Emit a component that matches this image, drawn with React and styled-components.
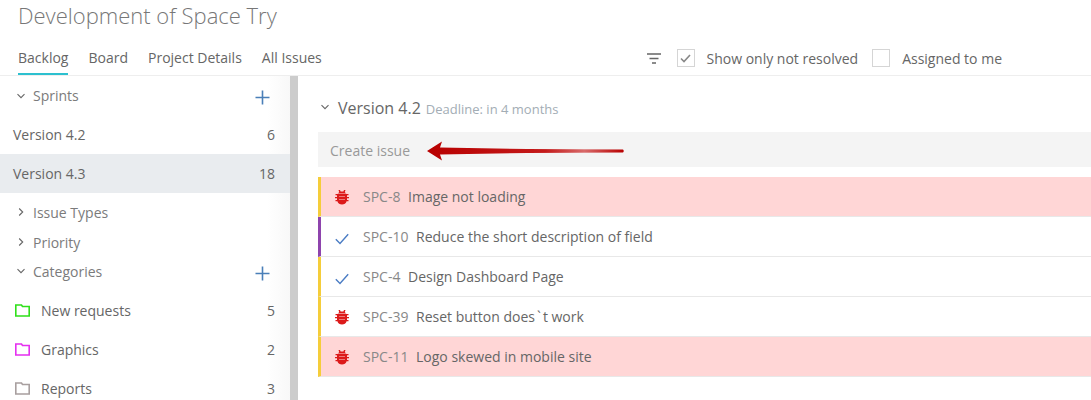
import React from 'react'
import styled, { createGlobalStyle } from 'styled-components'

const sprints = [
  { name: 'Version 4.2', count: 6 },
  { name: 'Version 4.3', count: 18, active: true },
]

const categories = [
  { name: 'New requests', count: 5, color: '#2fe01a' },
  { name: 'Graphics', count: 2, color: '#e52ff0' },
  { name: 'Reports', count: 3, color: '#a89f9f' },
]

const GlobalStyle = createGlobalStyle`
  html, body {
    margin: 0;
    padding: 0;
    background: #fff;
  }
  body {
    font-family: 'Open Sans', 'Liberation Sans', sans-serif;
    font-size: 14px;
    color: #666;
  }
`

const Page = styled.div`
  width: 1091px;
  height: 400px;
  overflow: hidden;
  display: flex;
  flex-direction: column;
`

const Header = styled.header`
  height: 76px;
  flex: none;
  box-sizing: border-box;
  border-bottom: 1px solid #eeeeee;
  padding-left: 18px;
`

const Title = styled.h1`
  margin: 0;
  height: 41px;
  font-size: 22px;
  line-height: 31px;
  font-weight: 300;
  color: #777;
`

const NavBar = styled.div`
  display: flex;
  justify-content: space-between;
  height: 34px;
`

const Tabs = styled.nav`
  display: flex;
  gap: 20px;
`

const Tab = styled.a`
  height: 34px;
  box-sizing: border-box;
  line-height: 33px;
  border-bottom: ${({ active }) => (active ? '2px solid #2cc0cf' : 'none')};
  color: #666;
`

const Filters = styled.div`
  display: flex;
  align-items: center;
  height: 34px;
  padding-right: 89px;
`

const FilterIcon = styled.svg`
  width: 14px;
  height: 11px;
  margin-right: 16px;
`

const CheckBox = styled.span`
  width: 18px;
  height: 18px;
  box-sizing: border-box;
  border: 1px solid #d5d5d5;
  display: flex;
  align-items: center;
  justify-content: center;
  margin-right: 12px;
`

const FilterLabel = styled.span`
  margin-right: 14px;
  line-height: 19px;
  color: #666;
  &:last-child {
    margin-right: 0;
  }
`

const Body = styled.div`
  flex: 1;
  display: flex;
  min-height: 0;
`

const Sidebar = styled.aside`
  width: 290px;
  flex: none;
  background: linear-gradient(90deg, #fff 92%, #f8f8f8 100%);
`

const Scrollbar = styled.div`
  width: 8px;
  flex: none;
  background: #cccccc;
`

const Group = styled.div`
  display: flex;
  align-items: center;
  height: ${({ h }) => h}px;
  padding: 0 20px 0 17px;
  box-sizing: border-box;
  color: #7b7b7b;
`

const GroupName = styled.span`
  flex: 1;
  margin-left: 8px;
  line-height: 19px;
`

const Chevron = styled.svg`
  width: 8px;
  height: 8px;
  flex: none;
`

const PlusIcon = styled.svg`
  width: 15px;
  height: 15px;
  margin-top: 4px;
  flex: none;
`

const SideRow = styled.div`
  display: flex;
  align-items: center;
  height: 39px;
  padding: 0 15px 0 13px;
  background: ${({ active }) => (active ? '#e9ecef' : 'transparent')};
  color: #666;
`

const RowName = styled.span`
  flex: 1;
`

const Spacer = styled.div`
  height: ${({ h }) => h}px;
`

const FolderIcon = styled.svg`
  width: 15px;
  height: 13px;
  margin: 0 11px 0 2px;
  flex: none;
`

const Main = styled.main`
  flex: 1;
  padding: 0 0 0 20px;
  min-width: 0;
`

const VersionHead = styled.div`
  display: flex;
  align-items: baseline;
  height: 56px;
  padding-top: 21px;
  box-sizing: border-box;
`

const VersionChevron = styled(Chevron)`
  margin: 0 9px 0 3px;
  align-self: center;
  position: relative;
  top: -8px;
`

const VersionName = styled.span`
  font-size: 16px;
  color: #666;
  margin-right: 5px;
`

const Deadline = styled.span`
  font-size: 13px;
  color: #a3adb5;
`

const CreateBar = styled.div`
  position: relative;
  height: 35px;
  line-height: 37px;
  padding-left: 12px;
  background: #f4f4f4;
  color: #999;
  margin-bottom: 10px;
`

const Arrow = styled.svg`
  position: absolute;
  left: 109px;
  top: 9px;
  width: 200px;
  height: 20px;
`

const IssueRow = styled.div`
  display: flex;
  align-items: center;
  height: 40px;
  box-sizing: border-box;
  border-left: 3px solid ${({ bar }) => bar};
  border-bottom: 1px solid #e8e8e8;
  background: ${({ hot }) => (hot ? '#ffd6d6' : '#fff')};
`

const IssueIcon = styled.span`
  width: 42px;
  height: 16px;
  flex: none;
  display: flex;
  justify-content: center;
  align-items: flex-end;
  padding-right: 1px;
  box-sizing: border-box;
`

const IssueId = styled.span`
  color: #888;
  margin-right: 7.6px;
`

const IssueTitle = styled.span`
  color: #666;
`

const Grave = styled.span`
  margin: 0 2px;
`

const issues = [
  { id: 'SPC-8', title: 'Image not loading', type: 'bug', bar: '#f5cd3a', hot: true },
  { id: 'SPC-10', title: 'Reduce the short description of field', type: 'task', bar: '#8e44ad' },
  { id: 'SPC-4', title: 'Design Dashboard Page', type: 'task', bar: '#f5cd3a' },
  {
    id: 'SPC-39',
    title: (
      <>
        Reset button does<Grave>`</Grave>t work
      </>
    ),
    type: 'bug',
    bar: '#f5cd3a',
  },
  { id: 'SPC-11', title: 'Logo skewed in mobile site', type: 'bug', bar: '#f5cd3a', hot: true },
]

const Caret = ({ open }) => (
  <Chevron viewBox="0 0 8 8">
    <path
      d={open ? 'M0.5 2.2 L4 5.7 L7.5 2.2' : 'M2.2 0.5 L5.7 4 L2.2 7.5'}
      fill="none"
      stroke="#666"
      strokeWidth="1.1"
    />
  </Chevron>
)

const Plus = () => (
  <PlusIcon viewBox="0 0 15 15">
    <path d="M7.5 0.5 V14.5 M0.5 7.5 H14.5" stroke="#4a7fb8" strokeWidth="1.6" />
  </PlusIcon>
)

const Folder = ({ color }) => (
  <FolderIcon viewBox="0 0 15 13">
    <path d="M0.8 12 V1 H6.5 L7.5 2.5 H14.2 V12 Z" fill="none" stroke={color} strokeWidth="1.6" />
  </FolderIcon>
)

const Bug = () => (
  <svg width="14" height="15" viewBox="0 0 14 15">
    <path
      fill="#dc1a1a"
      d="M3.5 0 L5 0 L5.6 1.5 H8.4 L9 0 H10.5 L9.8 2 L10.8 3.2 H3.2 L4.2 2 Z M0.5 4 H2.5 L3 3.8 H11 L11.5 4 H13.5 V5.3 H12 V7 H14 V8.3 H12 V10 H13.5 V11.3 H11.6 C11 13.4 9.2 14.6 7 14.6 C4.8 14.6 3 13.4 2.4 11.3 H0.5 V10 H2 V8.3 H0 V7 H2 V5.3 H0.5 Z"
    />
    <path d="M4 6.5 H10 M4 9.5 H10" stroke="#f4a0a0" strokeWidth="0.7" />
  </svg>
)

const Check = () => (
  <svg width="14" height="12" viewBox="0 0 14 12">
    <path d="M0.8 6.2 L5 10.4 L13.2 1.2" fill="none" stroke="#4a7cc4" strokeWidth="1.4" />
  </svg>
)

const App = () => {
  return (
    <Page>
      <GlobalStyle />
      <Header>
        <Title>Development of Space Try</Title>
        <NavBar>
          <Tabs>
            <Tab active>Backlog</Tab>
            <Tab>Board</Tab>
            <Tab>Project Details</Tab>
            <Tab>All Issues</Tab>
          </Tabs>
          <Filters>
            <FilterIcon viewBox="0 0 14 11">
              <path d="M0 1 H14 M2.5 5.5 H11.5 M5 10 H9" stroke="#666" strokeWidth="1.5" />
            </FilterIcon>
            <CheckBox>
              <svg width="11" height="9" viewBox="0 0 11 9">
                <path d="M1 4.5 L4 7.5 L10 1" fill="none" stroke="#888" strokeWidth="1.6" />
              </svg>
            </CheckBox>
            <FilterLabel>Show only not resolved</FilterLabel>
            <CheckBox />
            <FilterLabel>Assigned to me</FilterLabel>
          </Filters>
        </NavBar>
      </Header>

      <Body>
        <Sidebar>
          <Group h={39}>
            <Caret open />
            <GroupName>Sprints</GroupName>
            <Plus />
          </Group>
          {sprints.map((sprint) => (
            <SideRow key={sprint.name} active={sprint.active}>
              <RowName>{sprint.name}</RowName>
              <span>{sprint.count}</span>
            </SideRow>
          ))}
          <Spacer h={4} />
          <Group h={30}>
            <Caret />
            <GroupName>Issue Types</GroupName>
          </Group>
          <Group h={30}>
            <Caret />
            <GroupName>Priority</GroupName>
          </Group>
          <Group h={28}>
            <Caret open />
            <GroupName>Categories</GroupName>
            <Plus />
          </Group>
          <Spacer h={6} />
          {categories.map((category) => (
            <SideRow key={category.name}>
              <Folder color={category.color} />
              <RowName>{category.name}</RowName>
              <span>{category.count}</span>
            </SideRow>
          ))}
        </Sidebar>
        <Scrollbar />

        <Main>
          <VersionHead>
            <VersionChevron viewBox="0 0 8 8">
              <path d="M0.5 2.2 L4 5.7 L7.5 2.2" fill="none" stroke="#666" strokeWidth="1.1" />
            </VersionChevron>
            <VersionName>Version 4.2</VersionName>
            <Deadline>Deadline: in 4 months</Deadline>
          </VersionHead>
          <CreateBar>
            Create issue
            <Arrow viewBox="0 0 200 20">
              <defs>
                <linearGradient id="arrowFill" x1="0" x2="1" y1="0" y2="0">
                  <stop offset="0" stopColor="#b80000" />
                  <stop offset="0.6" stopColor="#c41a1a" />
                  <stop offset="0.8" stopColor="#d86a6a" />
                  <stop offset="1" stopColor="#b80000" />
                </linearGradient>
              </defs>
              <path
                d="M0 10 L15 0.5 L13 6.5 L100 8 L196 8.5 Q197.5 10 196 11.5 L100 12 L13 13.5 L15 19.5 Z"
                fill="url(#arrowFill)"
              />
            </Arrow>
          </CreateBar>
          {issues.map((issue) => (
            <IssueRow key={issue.id} bar={issue.bar} hot={issue.hot}>
              <IssueIcon>{issue.type === 'bug' ? <Bug /> : <Check />}</IssueIcon>
              <IssueId>{issue.id}</IssueId>
              <IssueTitle>{issue.title}</IssueTitle>
            </IssueRow>
          ))}
        </Main>
      </Body>
    </Page>
  )
}

export default App
